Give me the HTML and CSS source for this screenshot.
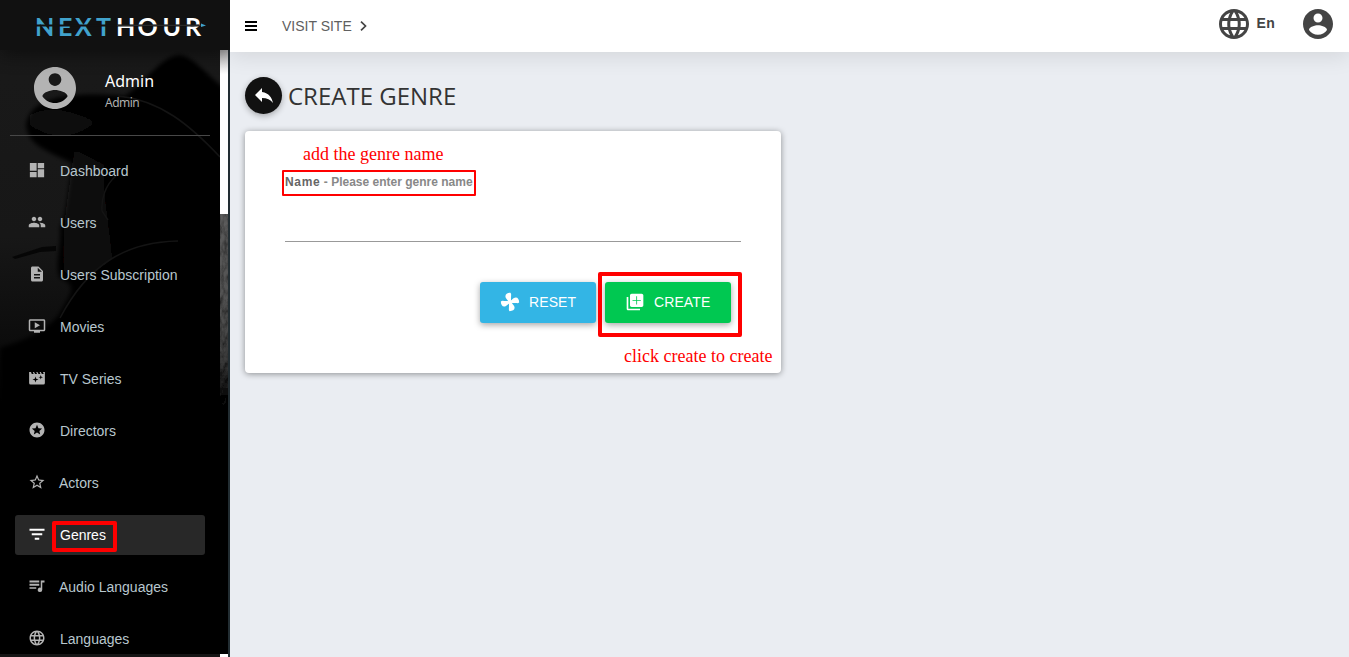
FILE: index.html
```html
<!DOCTYPE html>
<html lang="en">
<head>
<meta charset="utf-8">
<title>Create Genre</title>
<link rel="stylesheet" href="styles.css">
</head>
<body>
<div class="app">
  <aside class="sidebar">
    <svg class="backdrop" viewBox="0 0 228 657" aria-hidden="true">
      <defs>
        <linearGradient id="wall" x1="0" y1="0" x2="0" y2="1"><stop offset="0" stop-color="#1a1a1a"/><stop offset=".36" stop-color="#171717"/><stop offset=".52" stop-color="#0c0c0c"/><stop offset=".62" stop-color="#000"/></linearGradient>
        <linearGradient id="edge" x1="0" y1="0" x2="0" y2="1"><stop offset="0" stop-color="#5c5c5c"/><stop offset=".5" stop-color="#505050"/><stop offset=".7" stop-color="#444"/><stop offset="1" stop-color="#000"/></linearGradient>
        <filter id="soft"><feGaussianBlur stdDeviation="2"/></filter>
        <filter id="grain" x="0" y="0" width="1" height="1"><feTurbulence type="fractalNoise" baseFrequency=".25 .12" numOctaves="3" seed="4" result="n"/><feColorMatrix in="n" values="0 0 0 0 0  0 0 0 0 0  0 0 0 0 0  1.500 0 0 0 -.5" result="d"/><feComposite in="d" in2="SourceGraphic" operator="in" result="s"/><feMerge><feMergeNode in="SourceGraphic"/><feMergeNode in="s"/></feMerge></filter>
      </defs>
      <rect width="228" height="657" fill="url(#wall)"/>
      <g filter="url(#soft)">
        <path d="M26 125C30 98 66 91 125 96C150 78 160 58 178 55C192 54 205 75 230 92V410H0V348C32 338 45 330 58 316C72 292 78 286 60 278C54 265 62 245 60 228C68 210 70 180 72 163C45 150 28 145 26 125Z" fill="#060606"/>
        <path d="M75 150C68 190 62 230 64 270C78 286 96 272 112 258C108 220 102 190 104 165Z" fill="#0b0a0a"/>
        <path d="M30 115C50 104 75 112 95 122C75 140 50 139 30 125Z" fill="#090909"/>
      </g>
      <path d="M118 96C160 100 190 125 220 157M116 176C105 185 101 200 102 211L108 220M60 318C88 265 125 242 178 241" fill="none" stroke="#141414" stroke-width="1.500"/>
      <path d="M12 257L42 247L56 246V251L40 252L15 259Z" fill="#060606"/>
      <rect x="220" y="214" width="8" height="196" fill="url(#edge)" filter="url(#grain)"/>
    </svg>
    <div class="brand">
      <svg width="178" height="30" viewBox="0 0 178 30">
        <text class="logo-next" y="25" x="2 25 42 63">NEXT</text>
        <text class="logo-hour" y="25" x="83 104.500 129.500 152">HOUR</text>
        <path d="M2 14.500H166" stroke="#111" stroke-width="1.800"/>
        <path d="M84 14.300H168" stroke="#333"/>
        <path d="M168 12.500L173 14.500L168 16Z" fill="#41a3cc"/>
      </svg>
    </div>
    <div class="scrollbox">
      <div class="profile">
        <svg class="avatar" viewBox="2 2 20 20"><path d="M12 2C6.480 2 2 6.480 2 12s4.480 10 10 10 10-4.480 10-10S17.520 2 12 2zm0 3c1.660 0 3 1.340 3 3s-1.340 3-3 3-3-1.340-3-3 1.340-3 3-3zm0 14.200c-2.500 0-4.710-1.280-6-3.220.030-1.990 4-3.080 6-3.080 1.990 0 5.970 1.090 6 3.080-1.290 1.940-3.500 3.220-6 3.220z"/></svg>
        <div class="who"><span class="who-name">Admin</span><span class="who-role">Admin</span></div>
      </div>
      <nav class="menu">
        <a class="item"><svg viewBox="0 0 24 24"><path d="M2.500 13h9V2.500h-9V13zm0 8.500h9v-7h-9v7zm10.500 0h8.500V11H13v10.500zm0-19v7h8.500v-7H13z"/></svg><span>Dashboard</span></a>
        <a class="item"><svg viewBox="0 0 24 24"><path d="M16 11c1.660 0 2.990-1.340 2.990-3S17.660 5 16 5s-3 1.340-3 3 1.340 3 3 3zm-8 0c1.660 0 2.990-1.340 2.990-3S9.660 5 8 5 5 6.340 5 8s1.340 3 3 3zm0 2c-2.330 0-7 1.170-7 3.500V19h14v-2.500C15 14.170 10.330 13 8 13zm8 0c-.290 0-.620.020-.970.050 1.160.840 1.970 1.970 1.970 3.450V19h6v-2.500c0-2.330-4.670-3.500-7-3.500z"/></svg><span>Users</span></a>
        <a class="item"><svg viewBox="0 0 24 24"><path d="M14 2H6c-1.100 0-2 .900-2 2v16c0 1.100.900 2 2 2h12c1.100 0 2-.900 2-2V8l-6-6zm2 16H8v-2h8v2zm0-4H8v-2h8v2zm-3-5V3.500L18.500 9H13z"/></svg><span>Users Subscription</span></a>
        <a class="item"><svg viewBox="0 0 24 24"><path d="M9 7v8l7-4zm12-4H3c-1.100 0-2 .900-2 2v12c0 1.100.900 2 2 2h5v2h8v-2h5c1.100 0 2-.900 2-2V5c0-1.100-.900-2-2-2zm0 14H3V5h18v12z"/></svg><span>Movies</span></a>
        <a class="item"><svg viewBox="0 0 24 24"><path fill-rule="evenodd" d="M1.500 4V18.500Q1.500 20.500 3.500 20.500H20.500Q22.500 20.500 22.500 18.500V4H20L21 6.500H18.500L17 4H15.500L16.500 6.500H14L12.500 4H11L12 6.500H9.500L8 4H6.500L7.500 6.500H5L4 4ZM10 10L11 13L14 14L11 15L10 18L9 15L6 14L9 13ZM17 8L17.800 10.200L20 11L17.800 11.800L17 14L16.200 11.800L14 11L16.200 10.200Z"/></svg><span>TV Series</span></a>
        <a class="item"><svg viewBox="0 0 24 24"><path d="M11.990 2C6.470 2 2 6.480 2 12s4.470 10 9.990 10C17.520 22 22 17.520 22 12S17.520 2 11.990 2zm4.240 16L12 15.450 7.770 18l1.120-4.810-3.730-3.230 4.920-.420L12 5l1.920 4.530 4.920.420-3.730 3.230L16.230 18z"/></svg><span>Directors</span></a>
        <a class="item shifted"><svg viewBox="0 0 24 24"><path d="M22 9.240l-7.190-.620L12 2 9.190 8.630 2 9.240l5.460 4.730L5.820 21 12 17.270 18.180 21l-1.630-7.030L22 9.240zM12 15.400l-3.760 2.270 1-4.280-3.320-2.880 4.380-.380L12 6.100l1.710 4.040 4.380.380-3.320 2.880 1 4.280L12 15.400z"/></svg><span>Actors</span></a>
        <a class="item active"><svg viewBox="0 0 24 24"><path d="M2 5h20v2.500H2zM5 11h14v2.500H5zM9 17h6v2.500H9z"/></svg><span>Genres</span><i class="mark mark-genres"></i></a>
        <a class="item shifted"><svg viewBox="0 0 24 24"><path d="M2 4.500h13v2.800H2zm0 4.500h13v2.500H2zm0 4.500h9v2H2zM17 4.500h5v2.800h-3v9.700a3 3 0 1 1-2-2.820z"/></svg><span>Audio Languages</span></a>
        <a class="item"><svg viewBox="0 0 24 24"><use href="#globe"/></svg><span>Languages</span></a>
      </nav>
    </div>
    <div class="track"><div class="thumb"></div></div>
    <div class="bottom-edge"></div>
  </aside>
  <main class="main">
    <header class="topbar">
      <svg class="burger" viewBox="0 0 12 10"><path d="M0 0h12v2H0zM0 4h12v2H0zM0 8h12v2H0z"/></svg>
      <a class="visit">VISIT SITE</a>
      <svg class="chevron" viewBox="0 0 7 10"><path d="M1 .700L5.500 5L1 9.300"/></svg>
      <div class="tools">
        <svg class="globe" viewBox="2 2 20 20"><path id="globe" d="M11.990 2C6.470 2 2 6.480 2 12s4.470 10 9.990 10C17.520 22 22 17.520 22 12S17.520 2 11.990 2zm6.930 6h-2.950c-.320-1.250-.780-2.450-1.380-3.560 1.840.630 3.370 1.910 4.330 3.560zM12 4.040c.830 1.200 1.480 2.530 1.910 3.960h-3.820c.430-1.430 1.080-2.760 1.910-3.960zM4.260 14C4.100 13.360 4 12.690 4 12s.100-1.360.260-2h3.380c-.080.660-.140 1.320-.140 2 0 .680.060 1.340.140 2H4.260zm.820 2h2.950c.320 1.250.780 2.450 1.380 3.560-1.840-.630-3.370-1.900-4.330-3.560zm2.950-8H5.080c.960-1.660 2.490-2.930 4.330-3.560C8.810 5.550 8.350 6.750 8.030 8zM12 19.960c-.830-1.200-1.480-2.530-1.910-3.960h3.820c-.430 1.430-1.080 2.760-1.910 3.960zM14.340 14H9.660c-.090-.660-.160-1.320-.160-2 0-.680.070-1.350.160-2h4.680c.090.650.160 1.320.160 2 0 .680-.070 1.340-.160 2zm.250 5.560c.600-1.110 1.060-2.310 1.380-3.560h2.950c-.960 1.650-2.490 2.930-4.330 3.560zM16.360 14c.080-.660.140-1.320.140-2 0-.680-.060-1.340-.140-2h3.380c.160.640.260 1.310.260 2s-.100 1.360-.260 2h-3.380z"/></svg>
        <span class="lang">En</span>
        <svg class="account" viewBox="2 2 20 20"><path d="M12 2C6.480 2 2 6.480 2 12s4.480 10 10 10 10-4.480 10-10S17.520 2 12 2zm0 3c1.660 0 3 1.340 3 3s-1.340 3-3 3-3-1.340-3-3 1.340-3 3-3zm0 14.200c-2.500 0-4.710-1.280-6-3.220.030-1.990 4-3.080 6-3.080 1.990 0 5.970 1.090 6 3.080-1.290 1.940-3.500 3.220-6 3.220z"/></svg>
      </div>
    </header>
    <div class="content">
      <div class="heading">
        <a class="back"><svg viewBox="0 0 24 24"><path d="M10 9V5l-7 7 7 7v-4.100c5 0 8.500 1.600 11 5.100-1-5-4-10-11-11z"/></svg></a>
        <h1>CREATE GENRE</h1>
      </div>
      <section class="card">
        <span class="note note-name">add the genre name</span>
        <label class="field-label"><b>Name</b> <span class="hint">- Please enter genre name</span><i class="mark mark-name"></i></label>
        <input class="field" type="text">
        <div class="actions">
          <button class="btn reset"><svg viewBox="0 0 24 24"><defs><path id="blade" d="M13 13L10.500 12.500C10.200 9.500 6.500 8.500 6.500 5C6.500 2.500 9 1 12.500 1C13.500 2 13.500 3 13.300 4.500L13.200 9Z"/></defs><use href="#blade"/><use href="#blade" transform="rotate(90 12 12)"/><use href="#blade" transform="rotate(180 12 12)"/><use href="#blade" transform="rotate(270 12 12)"/></svg>RESET</button>
          <button class="btn create"><svg viewBox="0 0 24 24"><path d="M4 6H2v14c0 1.100.900 2 2 2h14v-2H4V6zm16-4H8c-1.100 0-2 .900-2 2v12c0 1.100.900 2 2 2h12c1.100 0 2-.900 2-2V4c0-1.100-.900-2-2-2zm-1 8.500h-4.500V15h-1v-4.500H9v-1h4.500V5h1v4.500H19v1z"/></svg>CREATE<i class="mark mark-create"></i></button>
        </div>
        <span class="note note-create">click create to create</span>
      </section>
    </div>
  </main>
</div>
</body>
</html>
```

FILE: styles.css
```css
* { box-sizing: border-box; }
body { margin: 0; font-family: "Liberation Sans", Arial, sans-serif; overflow: hidden; }
.app { display: flex; width: 1349px; height: 657px; background: #eaedf2; }

.sidebar { position: relative; z-index: 2; width: 230px; height: 657px; overflow: hidden; background: linear-gradient(90deg, #000 228px, #222d32 228px); }
.backdrop { position: absolute; inset: 0; width: 228px; height: 657px; }
.brand { position: relative; z-index: 2; width: 230px; height: 50px; padding: 11px 0 0 33px; background: #111; box-shadow: 0 5px 18px rgba(0,0,0,.45); }
.brand svg { display: block; }
.logo-next, .logo-hour { font: 700 25px Lato, sans-serif; fill: #41a3cc; }
.logo-hour { fill: #fff; }
.scrollbox { position: relative; width: 220px; }
.profile { display: flex; height: 86px; margin: 0 10px; padding: 17px 0 0 24px; border-bottom: 1px solid #484848; }
.avatar { width: 42px; height: 42px; fill: #b3b3b3; }
.who { display: flex; flex-direction: column; margin-left: 29px; font-family: "Noto Sans", sans-serif; }
.who-name { font-size: 16px; line-height: 22px; margin-top: 3px; color: #fff; }
.who-role { font-size: 12px; line-height: 18px; margin-top: 2px; color: #b0b0b0; letter-spacing: -.500px; }
.menu { display: flex; flex-direction: column; gap: 12px; padding: 15px 15px 0; }
.item { position: relative; display: flex; align-items: center; height: 40px; padding-left: 13px; border-radius: 3px; color: #b8c7ce; font-size: 14px; }
.item svg { width: 18px; height: 18px; margin: -2px 14px 0 0; fill: #b3b3b3; }
.shifted svg { margin-right: 13px; }
.active { background: #282828; color: #fff; }
.active svg { fill: #fff; }
.track { position: absolute; right: 2px; top: 50px; width: 8px; height: 607px; }
.thumb { height: 164px; background: linear-gradient(#b5b5b5, #fff 24px); }
.bottom-edge { position: absolute; left: 0; bottom: 0; width: 228px; height: 3px; background: linear-gradient(90deg, #151515 220px, #fff 220px); }

.mark { position: absolute; border: 4px solid #f00; border-radius: 2px; pointer-events: none; }
.mark-genres { left: 37px; top: 6px; width: 65px; height: 31px; }
.mark-name { left: -3px; top: -5px; width: 194px; height: 26px; border-width: 2px; border-radius: 1px; }
.mark-create { left: -7px; top: -10px; width: 144px; height: 65px; }

.main { flex: 1; }
.topbar { display: flex; align-items: center; height: 52px; padding: 0 16px 0 15px; background: #fff; box-shadow: 0 4px 22px rgba(0,0,0,.1); }
.burger { width: 12px; height: 10px; fill: #000; margin-right: 25px; shape-rendering: crispEdges; }
.visit { font-size: 14px; color: #606060; }
.chevron { width: 7px; height: 10px; margin-left: 8px; fill: none; stroke: #444; stroke-width: 1.700; }
.tools { display: flex; align-items: center; margin: -5px 0 0 auto; }
.globe, .account { width: 30px; height: 30px; fill: #444; }
.lang { margin: -2px 28px 0 8px; font-size: 14px; font-weight: 700; color: #444; letter-spacing: .300px; }

.content { padding: 25px 15px; }
.heading { display: flex; align-items: center; height: 37px; }
.back { display: flex; align-items: center; justify-content: center; width: 37px; height: 37px; border-radius: 50%; background: #111; box-shadow: 0 2px 6px rgba(0,0,0,.3); }
.back svg { width: 24px; height: 24px; margin-top: -2px; fill: #fff; }
h1 { margin: 0 0 0 6px; font: 400 24px "Open Sans", sans-serif; color: #333; }
.card { position: relative; width: 536px; height: 242px; margin-top: 17px; padding: 44px 40px 0; background: #fff; border-radius: 4px; box-shadow: 0 1px 6px rgba(0,0,0,.4); }
.field-label { position: relative; display: block; height: 16px; color: #888; font-size: 12px; font-weight: 700; line-height: 14px; white-space: nowrap; }
.field-label b { color: #666; letter-spacing: .700px; }
.field { display: block; width: 456px; height: 51px; padding: 0; border: 0; border-bottom: 1px solid #999; background: none; outline: none; }
.actions { display: flex; gap: 9px; margin: 40px 0 0 195px; }
.btn { position: relative; display: flex; align-items: center; width: 116px; height: 41px; padding: 0 0 2px 20px; border: 0; border-radius: 3px; color: #fff; font: 14px "Liberation Sans", Arial, sans-serif; letter-spacing: .100px; box-shadow: 0 2px 6px rgba(0,0,0,.35); }
.btn svg { width: 20px; height: 20px; margin-right: 9px; fill: #fff; }
.reset { background: #33b5e5; }
.create { width: 126px; background: #00c851; }
.note { position: absolute; color: #f00; font: 18px/20px "Liberation Serif", "Times New Roman", serif; white-space: nowrap; }
.note-name { left: 58px; top: 13px; }
.note-create { left: 379px; top: 215px; }
```
